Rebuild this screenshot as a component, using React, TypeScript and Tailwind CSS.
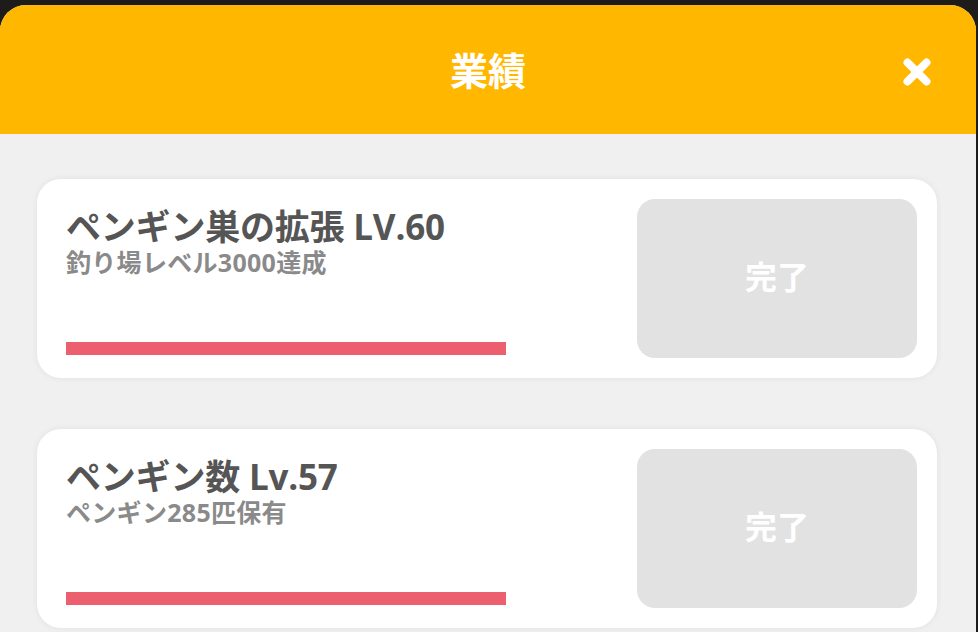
import { X } from "lucide-react";

const achievements = [
  { title: "ペンギン巣の拡張 LV.60", desc: "釣り場レベル3000達成", progress: 100 },
  { title: "ペンギン数 Lv.57", desc: "ペンギン285匹保有", progress: 100 },
];

export default function App() {
  return (
    <div
      className="h-[632px] overflow-hidden bg-[#1e1c1b] pt-[5px] pr-[2px]"
      style={{ fontFamily: '"Open Sans", "Noto Sans CJK JP", sans-serif' }}
    >
      <div className="flex h-full flex-col overflow-hidden rounded-t-[26px] bg-[#f1f0f0]">
        {/* Header */}
        <div className="relative flex h-[129px] shrink-0 items-center justify-center bg-[#ffb700]">
          <h1 className="text-[38px] font-bold leading-none text-white">業績</h1>
          <button className="absolute right-[40px] top-[48px] text-white">
            <X className="h-[38px] w-[38px]" strokeWidth={5} />
          </button>
        </div>

        {/* Achievement list */}
        <div className="flex flex-col gap-[51px] px-[37px] pt-[45px] pr-[39px]">
          {achievements.map((a) => (
            <div
              key={a.title}
              className="flex h-[199px] shrink-0 rounded-[24px] bg-white p-[20px] shadow-[0_0_6px_rgba(0,0,0,0.07)]"
            >
              <div className="flex flex-1 flex-col pl-[9px] pt-[8px] pb-[3px]">
                <p className="text-[35px] font-bold leading-[40px] tracking-[-0.2px] text-[#555555]">{a.title}</p>
                <p className="text-[25px] font-bold leading-[30px] tracking-[0.3px] text-[#8a8a8a]">{a.desc}</p>
                <div className="mt-auto h-[13px] w-[440px] bg-[#eeeeee]">
                  <div className="h-full bg-[#ec5f6e]" style={{ width: `${a.progress}%` }} />
                </div>
              </div>
              <div className="flex w-[280px] items-center justify-center rounded-[18px] bg-[#e2e2e2] pb-[4px]">
                <span className="text-[32px] font-bold leading-none text-white">完了</span>
              </div>
            </div>
          ))}
        </div>
      </div>
    </div>
  );
}
